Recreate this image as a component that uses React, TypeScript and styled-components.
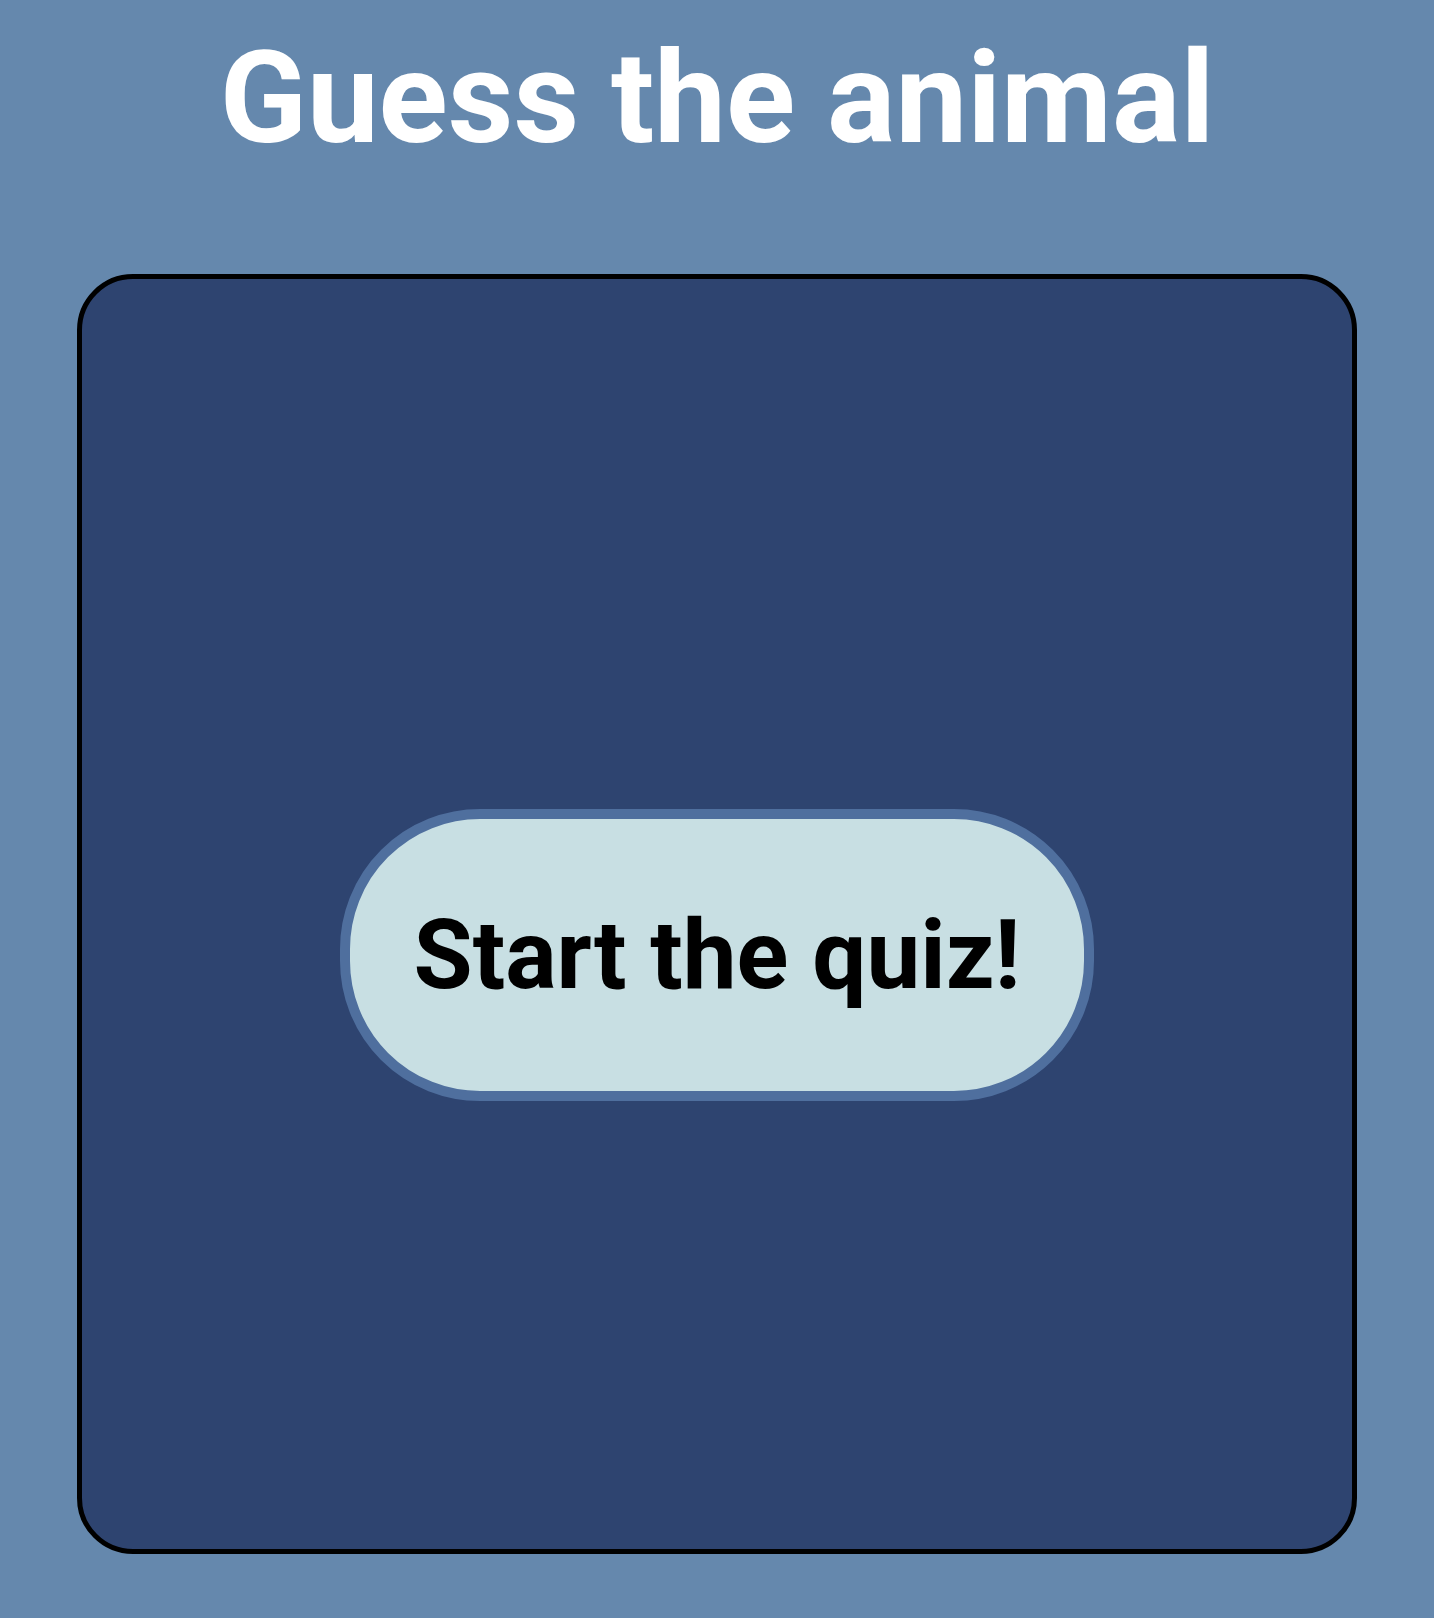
import React from "react";
import styled, { createGlobalStyle } from "styled-components";

const GlobalStyle = createGlobalStyle`
  html, body {
    margin: 0;
    padding: 0;
    background: #6588ad;
    font-family: Roboto, "Liberation Sans", Arial, sans-serif;
  }
  #root {
    min-height: 1618px;
  }
`;

const Page = styled.main`
  display: flex;
  flex-direction: column;
  align-items: center;
  padding-top: 23px;
  min-height: 1618px;
  box-sizing: border-box;
`;

const Title = styled.h1`
  margin: 0;
  font-family: Roboto, "Liberation Sans", Arial, sans-serif;
  font-weight: 700;
  font-size: 128px;
  line-height: 150px;
  color: #ffffff;
  text-align: center;
`;

const Card = styled.section`
  margin-top: 101px;
  width: 1280px;
  height: 1280px;
  box-sizing: border-box;
  background: #2e4470;
  border: 5px solid #000000;
  border-radius: 56px;
  display: flex;
  align-items: center;
  justify-content: center;
  padding-top: 82px;
`;

const StartButton = styled.button`
  font-family: Roboto, "Liberation Sans", Arial, sans-serif;
  font-weight: 700;
  font-size: 96px;
  line-height: 112px;
  color: #000000;
  background: #c8dfe3;
  border: 10px solid #4f6f9e;
  border-radius: 140px;
  padding: 80px 64px;
  cursor: pointer;
  white-space: nowrap;
`;

export default function App() {
  return (
    <>
      <GlobalStyle />
      <Page>
        <Title>Guess the animal</Title>
        <Card>
          <StartButton>Start the quiz!</StartButton>
        </Card>
      </Page>
    </>
  );
}
